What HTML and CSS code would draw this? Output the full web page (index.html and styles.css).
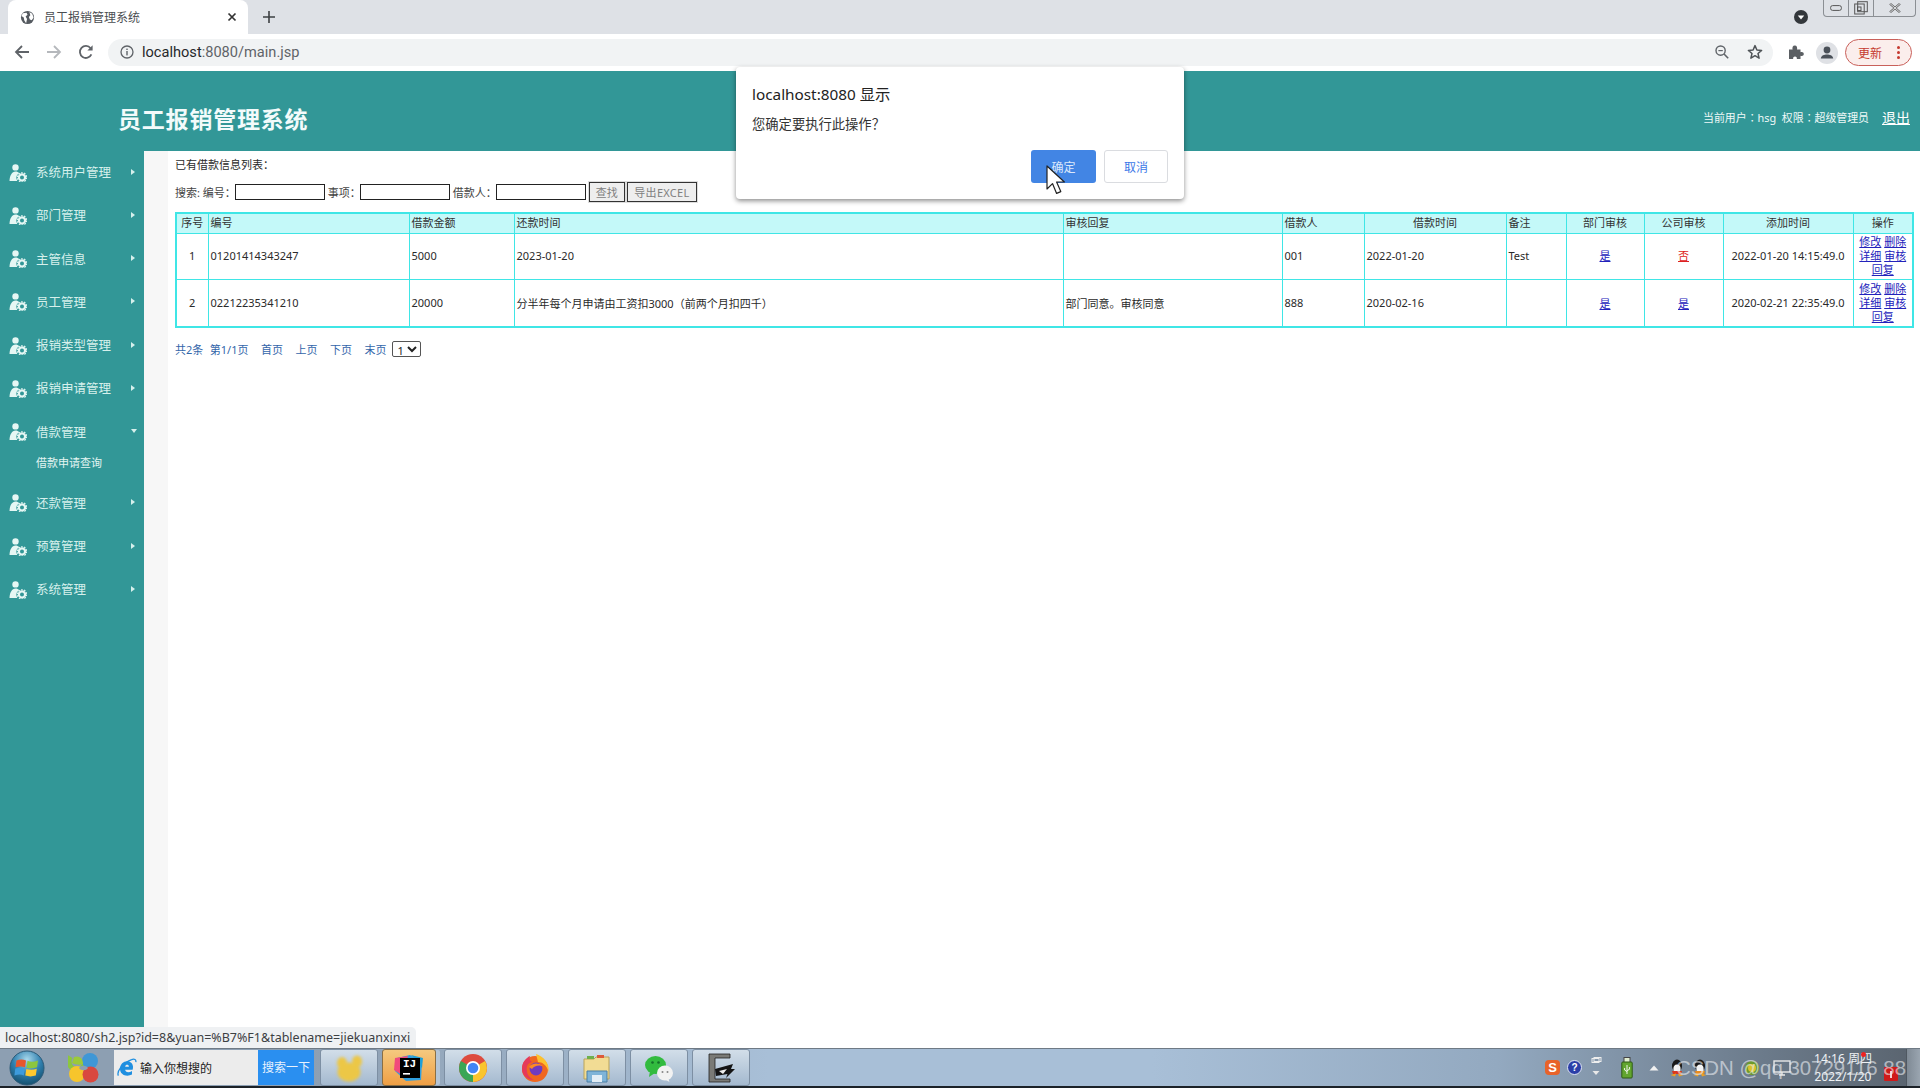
FILE: index.html
```html
<!DOCTYPE html>
<html lang="zh">
<head>
<meta charset="utf-8">
<title>员工报销管理系统</title>
<link rel="stylesheet" href="styles.css">
</head>
<body>
<svg class="sprite" width="0" height="0" aria-hidden="true">
  <symbol id="usergear" viewBox="0 0 18 18">
    <circle cx="6.5" cy="3.4" r="3.2" fill="#e6f7f4"/>
    <path d="M0.5 17 C0.8 11 3 7.6 6.5 7.4 C8 7.4 9.4 8 10.3 9.2 C8 10.4 7 12.5 7.4 14.5 L8.2 17 Z" fill="#e6f7f4"/>
    <circle cx="13" cy="13.4" r="3.1" fill="none" stroke="#e6f7f4" stroke-width="2.2"/>
    <circle cx="13" cy="13.4" r="4.7" fill="none" stroke="#e6f7f4" stroke-width="1.1" stroke-dasharray="1.7 1.25"/>
  </symbol>
</svg>

<header class="tabstrip">
  <div class="tab">
    <svg class="tab-globe" viewBox="0 0 16 16"><circle cx="8" cy="8" r="7" fill="#555a60"/><path d="M3 3.5 L7 3 L8 5 L6 7 L7.5 9.5 L6.5 14 L4.5 11 L4 8 L1.5 6.5 Z M10 2 L13 4 L14.5 8 L12.5 11 L10.5 10 L9.5 7.5 L11 5.5 Z" fill="#fff"/></svg>
    <span class="tab-title">员工报销管理系统</span>
    <svg class="tab-close" viewBox="0 0 10 10"><path d="M1.5 1.5 L8.5 8.5 M8.5 1.5 L1.5 8.5" stroke="#333" stroke-width="1.7" fill="none"/></svg>
  </div>
  <svg class="tab-new" viewBox="0 0 12 12"><path d="M6 0 V12 M0 6 H12" stroke="#3c4043" stroke-width="1.6" fill="none"/></svg>
  <svg class="tab-search" viewBox="0 0 14 14"><circle cx="7" cy="7" r="7" fill="#33373b"/><path d="M3.8 5.5 H10.2 L7 9.6 Z" fill="#fff"/></svg>
  <div class="winctl">
    <span class="winbtn win-min"><svg viewBox="0 0 12 6" width="12" height="6"><rect x="0.6" y="0.6" width="10.8" height="4.8" rx="2" fill="none" stroke="#555" stroke-width="1"/></svg></span>
    <span class="winbtn win-max"><svg viewBox="0 0 14 14" width="14" height="14"><rect x="0.7" y="3" width="9.5" height="10" fill="#dee1e6" stroke="#555"/><rect x="3.7" y="0.7" width="9.6" height="10" fill="none" stroke="#555"/><rect x="3.5" y="6" width="3.5" height="3.5" fill="none" stroke="#555"/></svg></span>
    <span class="winbtn win-close"><svg viewBox="0 0 12 10" width="12" height="10"><path d="M1 0.6 L11 9.4 M11 0.6 L1 9.4" stroke="#666" stroke-width="2.2" fill="none"/><path d="M1 0.6 L11 9.4 M11 0.6 L1 9.4" stroke="#e8eaed" stroke-width="0.9" fill="none"/></svg></span>
  </div>
</header>

<nav class="toolbar">
  <svg class="nav-ic" viewBox="0 0 16 16"><path d="M15 8 H2 M8 2 L2 8 L8 14" stroke="#5f6368" stroke-width="1.8" fill="none"/></svg>
  <svg class="nav-ic nav-fwd" viewBox="0 0 16 16"><path d="M1 8 H14 M8 2 L14 8 L8 14" stroke="#b5b8bc" stroke-width="1.8" fill="none"/></svg>
  <svg class="nav-ic nav-reload" viewBox="0 0 16 16"><path d="M13.4 10.4 A6 6 0 1 1 12.6 4.2" stroke="#5f6368" stroke-width="1.8" fill="none"/><path d="M14.6 1.2 V6.4 H9.4 Z" fill="#5f6368"/></svg>
  <div class="omnibox">
    <svg class="omni-info" viewBox="0 0 14 14"><circle cx="7" cy="7" r="6" fill="none" stroke="#5f6368" stroke-width="1.3"/><rect x="6.3" y="6" width="1.4" height="4.4" fill="#5f6368"/><rect x="6.3" y="3.6" width="1.4" height="1.4" fill="#5f6368"/></svg>
    <span class="omni-url"><b>localhost</b>:8080/main.jsp</span>
    <svg class="omni-zoom" viewBox="0 0 14 14"><circle cx="5.6" cy="5.6" r="4.6" fill="none" stroke="#5f6368" stroke-width="1.4"/><path d="M9 9 L13.2 13.2" stroke="#5f6368" stroke-width="1.6"/><path d="M3.4 5.6 H7.8" stroke="#5f6368" stroke-width="1.2"/></svg>
    <svg class="omni-star" viewBox="0 0 16 16"><path d="M8 1.6 L9.9 6 L14.6 6.4 L11 9.5 L12.1 14.2 L8 11.7 L3.9 14.2 L5 9.5 L1.4 6.4 L6.1 6 Z" fill="none" stroke="#4f5357" stroke-width="1.5" stroke-linejoin="round"/></svg>
  </div>
  <svg class="tool-puzzle" viewBox="0 0 16 16"><path d="M1 5.5 H4.6 C4 3.6 4.8 1.4 6.8 1.4 C8.8 1.4 9.6 3.6 9 5.5 H12.5 V8.2 C14.4 7.6 15.8 8.4 15.8 10 C15.8 11.6 14.4 12.4 12.5 11.8 V15 H8.8 C9.2 13.4 8.4 12.4 7 12.4 C5.6 12.4 4.8 13.4 5.2 15 H1 Z" fill="#5b5f63"/></svg>
  <svg class="tool-avatar" viewBox="0 0 22 22"><circle cx="11" cy="11" r="11" fill="#dfe1e5"/><circle cx="11" cy="8" r="3.4" fill="#4a5058"/><path d="M4.8 16.4 C5.4 13.4 8.2 12.6 11 12.6 C13.8 12.6 16.6 13.4 17.2 16.4 Z" fill="#4a5058"/></svg>
  <div class="update-pill">
    <span class="update-text">更新</span>
    <span class="update-dots"><i></i><i></i><i></i></span>
  </div>
</nav>

<div class="page">
  <div class="site-head">
    <h1 class="site-title">员工报销管理系统</h1>
    <div class="site-user">当前用户<span class="cp">：</span>hsg&nbsp; 权限<span class="cp">：</span>超级管理员<a class="site-exit" href="#">退出</a></div>
  </div>
  <div class="site-body">
    <aside class="sidebar">
      <div class="menu-row"><svg class="menu-ic"><use href="#usergear"/></svg><span class="menu-label">系统用户管理</span><i class="caret"></i></div>
      <div class="menu-row"><svg class="menu-ic"><use href="#usergear"/></svg><span class="menu-label">部门管理</span><i class="caret"></i></div>
      <div class="menu-row"><svg class="menu-ic"><use href="#usergear"/></svg><span class="menu-label">主管信息</span><i class="caret"></i></div>
      <div class="menu-row"><svg class="menu-ic"><use href="#usergear"/></svg><span class="menu-label">员工管理</span><i class="caret"></i></div>
      <div class="menu-row"><svg class="menu-ic"><use href="#usergear"/></svg><span class="menu-label">报销类型管理</span><i class="caret"></i></div>
      <div class="menu-row"><svg class="menu-ic"><use href="#usergear"/></svg><span class="menu-label">报销申请管理</span><i class="caret"></i></div>
      <div class="menu-row"><svg class="menu-ic"><use href="#usergear"/></svg><span class="menu-label">借款管理</span><i class="caret caret-down"></i></div>
      <div class="menu-sub">借款申请查询</div>
      <div class="menu-row"><svg class="menu-ic"><use href="#usergear"/></svg><span class="menu-label">还款管理</span><i class="caret"></i></div>
      <div class="menu-row"><svg class="menu-ic"><use href="#usergear"/></svg><span class="menu-label">预算管理</span><i class="caret"></i></div>
      <div class="menu-row"><svg class="menu-ic"><use href="#usergear"/></svg><span class="menu-label">系统管理</span><i class="caret"></i></div>
    </aside>
    <div class="stripe"></div>
    <main class="content">
      <p class="list-title">已有借款信息列表<span class="cp">：</span></p>
      <form class="search-row">
        <span>搜索: 编号<i class="cp">：</i></span><input class="search-input" type="text">
        <span>事项<i class="cp">：</i></span><input class="search-input" type="text">
        <span>借款人<i class="cp">：</i></span><input class="search-input" type="text">
        <button class="search-btn" type="button">查找</button>
        <button class="search-btn" type="button">导出EXCEL</button>
      </form>
      <table class="grid">
        <colgroup>
          <col class="c-seq"><col class="c-no"><col class="c-amt"><col class="c-date"><col class="c-reply"><col class="c-who"><col class="c-when"><col class="c-note"><col class="c-a1"><col class="c-a2"><col class="c-add"><col class="c-op">
        </colgroup>
        <thead>
          <tr>
            <th class="mid">序号</th><th>编号</th><th>借款金额</th><th>还款时间</th><th>审核回复</th><th>借款人</th><th class="mid">借款时间</th><th>备注</th><th class="mid">部门审核</th><th class="mid">公司审核</th><th class="mid">添加时间</th><th class="mid">操作</th>
          </tr>
        </thead>
        <tbody>
          <tr class="row-a">
            <td class="mid">1</td><td>01201414343247</td><td>5000</td><td>2023-01-20</td><td></td><td>001</td><td>2022-01-20</td><td>Test</td>
            <td class="mid"><a class="lnk" href="#">是</a></td><td class="mid"><a class="lnk lnk-red" href="#">否</a></td><td class="mid">2022-01-20 14:15:49.0</td>
            <td class="mid ops"><a class="lnk" href="#">修改</a> <a class="lnk" href="#">删除</a> <a class="lnk" href="#">详细</a> <a class="lnk" href="#">审核</a> <a class="lnk" href="#">回复</a></td>
          </tr>
          <tr class="row-b">
            <td class="mid">2</td><td>02212235341210</td><td>20000</td><td>分半年每个月申请由工资扣3000（前两个月扣四千）</td><td>部门同意。审核同意</td><td>888</td><td>2020-02-16</td><td></td>
            <td class="mid"><a class="lnk" href="#">是</a></td><td class="mid"><a class="lnk" href="#">是</a></td><td class="mid">2020-02-21 22:35:49.0</td>
            <td class="mid ops"><a class="lnk" href="#">修改</a> <a class="lnk" href="#">删除</a> <a class="lnk" href="#">详细</a> <a class="lnk" href="#">审核</a> <a class="lnk" href="#">回复</a></td>
          </tr>
        </tbody>
      </table>
      <div class="pager">
        <span class="pg-count">共2条</span><span>第1/1页</span><span class="pg-gap">首页</span><span class="pg-gap">上页</span><span class="pg-gap">下页</span><span class="pg-gap">末页</span>
        <select class="pg-select"><option>1</option></select>
      </div>
    </main>
  </div>
  <div class="status-bubble">localhost:8080/sh2.jsp?id=8&amp;yuan=%B7%F1&amp;tablename=jiekuanxinxi</div>
</div>

<footer class="taskbar">
  <svg class="orb" viewBox="0 0 36 36">
    <defs><radialGradient id="orbg" cx="50%" cy="25%" r="75%"><stop offset="0" stop-color="#a8d8ec"/><stop offset="0.55" stop-color="#2f7fae"/><stop offset="1" stop-color="#14506f"/></radialGradient></defs>
    <circle cx="18" cy="18" r="17" fill="url(#orbg)" stroke="#2d5a78"/>
    <path d="M7.5 10.5 Q12.5 8.5 17 10.5 L16 17.2 Q12 15.6 6.5 17.2 Z" fill="#e8562c"/>
    <path d="M18.5 10.8 Q23 13 29 10.4 L28 17.3 Q22.5 19.2 17.5 17.7 Z" fill="#8cc63f"/>
    <path d="M6.3 18.6 Q12 17 15.8 18.6 L14.8 25.4 Q11 23.6 5.4 25.4 Z" fill="#3d9bdc"/>
    <path d="M17.3 19 Q22.4 20.6 27.8 18.8 L26.8 25.6 Q21.4 27.2 16.3 25.6 Z" fill="#fdc82f"/>
  </svg>
  <svg class="logo360" viewBox="0 0 31 31">
    <circle cx="9" cy="9.5" r="8" fill="none" stroke="#8cc63f" stroke-width="5" stroke-dasharray="30 20"/>
    <circle cx="22" cy="9" r="8" fill="#3f97d6"/>
    <circle cx="9" cy="22" r="8" fill="#f6c52c"/>
    <circle cx="22.5" cy="22.5" r="8" fill="#d9483f"/>
    <path d="M6 5 C11 3 15 6 15 12 C12 13 8 13 4 11 Z" fill="#9cc93a"/>
    <path d="M11 16 C13 13 18 13 20 16 C18 19 13 19 11 16 Z" fill="#8d9fb2"/>
  </svg>
  <div class="tb-search">
    <svg class="tb-ie" viewBox="0 0 20 20"><path d="M15.6 11.8 H8.2 C8.2 14.4 12 15 15 12.9 V16.6 C9.6 19.2 3 17 3 10.8 C3 6 7 2.8 10.6 3.2 C15 3.6 17 7.6 15.6 11.8 Z M8.2 8.8 H11.9 C11.9 6.2 8.4 6.2 8.2 8.8 Z" fill="#1f8fe0" fill-rule="evenodd"/><path d="M1.4 17.6 C-0.6 14 5 5.4 14.6 1.6 C17.4 0.4 19.4 1.6 18.8 4.2" fill="none" stroke="#1f8fe0" stroke-width="1.3"/></svg>
    <span class="tb-search-text">输入你想搜的</span>
    <span class="tb-search-btn">搜索一下</span>
  </div>
  <div class="tb-apps">
    <div class="tb-app">
      <svg class="tb-ic tb-blur" viewBox="0 0 30 30"><ellipse cx="15" cy="19" rx="11.5" ry="9.5" fill="#ecc746"/><ellipse cx="8" cy="10" rx="5" ry="6" fill="#ecc746"/><ellipse cx="23" cy="8.5" rx="5" ry="6" fill="#ecc746"/></svg>
    </div>
    <div class="tb-app tb-active">
      <svg class="tb-ic" viewBox="0 0 30 30"><path d="M3 5 L16 2 L28 10 L27 27 L12 28 L1 18 Z" fill="#2f9fe0"/><path d="M1 5 L14 3 L8 22 L0 17 Z" fill="#f14a7c"/><path d="M17 2 L29 5 L28 15 Z" fill="#1f9fd8"/><rect x="6" y="5" width="20" height="20" fill="#000"/><text class="ij-text" x="9" y="14">IJ</text><rect x="9" y="20" width="7" height="1.6" fill="#fff"/></svg>
    </div>
    <div class="tb-app">
      <svg class="tb-ic" viewBox="0 0 30 30"><circle cx="15" cy="15" r="14" fill="#dd4b3e"/><path d="M15 15 L27.1 8 A14 14 0 0 1 15 29 Z" fill="#f9c52d"/><path d="M15 15 L15 29 A14 14 0 0 1 2.9 8 Z" fill="#3aa655"/><circle cx="15" cy="15" r="7" fill="#fff"/><circle cx="15" cy="15" r="5.3" fill="#4285f4"/></svg>
    </div>
    <div class="tb-app">
      <svg class="tb-ic" viewBox="0 0 30 30"><circle cx="15" cy="16" r="13" fill="#f0671f"/><path d="M16 1 C23 3 30 10 28.5 19 C27 12 22 9 18 9 Z" fill="#fcc12e"/><path d="M2 16 C2 9 6 5 10 3 C9 6 10 8 12 9 C8 10 6 13 7 18 C7 22 10 25 14 27 C7 27 2 22 2 16 Z" fill="#e53a5a"/><circle cx="16" cy="16" r="6.4" fill="#6f3bc0"/><path d="M9 14 C12 10 18 9 23 13 C18 11.5 14 13 12 16 Z" fill="#fb8b24"/></svg>
    </div>
    <div class="tb-app">
      <svg class="tb-ic" viewBox="0 0 30 30"><path d="M2 6 H12 L14 4 H27 V26 H2 Z" fill="#f2dc94" stroke="#b9a35a"/><rect x="5" y="3" width="7" height="3" fill="#6fb04c"/><rect x="15" y="2" width="7" height="3" fill="#dd5a3a"/><path d="M5 18 H25 V29 H5 Z" fill="#7fb4d8" stroke="#4a7ea5"/><path d="M10 22 H20 V29 H10 Z" fill="#e3eef6"/></svg>
    </div>
    <div class="tb-app">
      <svg class="tb-ic" viewBox="0 0 30 30"><ellipse cx="11.5" cy="12" rx="10.5" ry="9" fill="#32bb3f"/><path d="M6 18 L5 24 L11 20 Z" fill="#32bb3f"/><circle cx="8.5" cy="9.5" r="1.3" fill="#14702a"/><circle cx="14.5" cy="9.5" r="1.3" fill="#14702a"/><ellipse cx="21" cy="20" rx="8" ry="7.5" fill="#f2f2f2"/><path d="M24 25 L25.5 29 L21 26.5 Z" fill="#f2f2f2"/><circle cx="18.5" cy="19" r="1" fill="#888"/><circle cx="23.5" cy="19" r="1" fill="#888"/></svg>
    </div>
    <div class="tb-app">
      <svg class="tb-ic" viewBox="0 0 30 30"><path d="M3 1 H24 V5 H9 V26 H24 V29 H3 Z" fill="#7a7a76" stroke="#222" stroke-width="0.8"/><path d="M9 16 L27 11 L25 16 L29 16 L20 25 L21.5 21 L10 23 Z" fill="#141414"/><path d="M13 18 L21 16 L17 21 Z" fill="#eee"/></svg>
    </div>
  </div>
  <div class="tray">
    <span class="tray-sogou">S</span>
    <span class="tray-help">?</span>
    <svg class="tray-small" viewBox="0 0 12 22"><rect x="2" y="1.5" width="7" height="4" fill="none" stroke="#eee"/><rect x="4" y="0.5" width="7" height="4" fill="none" stroke="#eee"/><path d="M2.5 14 H9.5 L6 18 Z" fill="#e8e8e8"/></svg>
    <svg class="tray-usb" viewBox="0 0 12 22"><rect x="3" y="0.5" width="6" height="5" fill="#e2efd0" stroke="#444"/><rect x="0.8" y="5" width="10.4" height="16" rx="1" fill="#62a52e" stroke="#2e5a14"/><path d="M6 8 V17 M3.6 11 V13 L6 14.6 M8.4 10 V12.4 L6 13.6" stroke="#fff" stroke-width="0.9" fill="none"/></svg>
    <svg class="tray-arrow" viewBox="0 0 10 6"><path d="M5 0.5 L9.5 5.5 H0.5 Z" fill="#f1f1f1"/></svg>
    <svg class="tray-qq" viewBox="0 0 16 18"><ellipse cx="8" cy="7" rx="5" ry="6.5" fill="#191919"/><ellipse cx="8" cy="10" rx="3.6" ry="4.5" fill="#f5f5f5"/><path d="M3 12 H13 L12 15 H4 Z" fill="#d9371f"/><path d="M1.5 16 L7 14.5 L6 17.5 Z M14.5 16 L9 14.5 L10 17.5 Z" fill="#f0a11f"/></svg>
    <svg class="tray-qq" viewBox="0 0 16 18"><ellipse cx="8" cy="7" rx="5" ry="6.5" fill="#191919"/><ellipse cx="8" cy="10" rx="3.6" ry="4.5" fill="#f5f5f5"/><path d="M3 12 H13 L12 15 H4 Z" fill="#e98b1e"/><path d="M1.5 16 L7 14.5 L6 17.5 Z M14.5 16 L9 14.5 L10 17.5 Z" fill="#f0a11f"/></svg>
    <svg class="tray-green" viewBox="0 0 16 16"><circle cx="8" cy="8" r="7" fill="#6d9a2c"/><circle cx="8" cy="8" r="4" fill="#d8c22c"/></svg>
    <svg class="tray-net" viewBox="0 0 18 16"><rect x="1" y="1" width="16" height="11" fill="none" stroke="#e9e9e9" stroke-width="1.4"/><path d="M6 15 H12 M9 12 V15" stroke="#e9e9e9" stroke-width="1.4"/></svg>
    <div class="clock"><span>14:16 周四</span><span>2022/1/20</span></div>
    <svg class="tray-flag" viewBox="0 0 14 14"><rect width="14" height="14" rx="1" fill="#cf1a1a"/><rect x="6.2" y="4" width="1.6" height="7" fill="#fff"/></svg>
    <div class="show-desktop"></div>
  </div>
  <span class="tray-dot"></span>
  <span class="watermark">CSDN @qq 30729116 88</span>
</footer>

<div class="dialog">
  <div class="dlg-title">localhost:8080 显示</div>
  <div class="dlg-msg">您确定要执行此操作<span class="cp">？</span></div>
  <div class="dlg-actions">
    <button class="dlg-btn dlg-ok" type="button">确定</button>
    <button class="dlg-btn dlg-cancel" type="button">取消</button>
  </div>
</div>
<svg class="cursor" viewBox="0 0 20 30"><path d="M1 1 V24 L6.5 18.6 L10.6 28.4 L14.8 26.6 L10.6 17 L18.4 17 Z" fill="#fff" stroke="#222" stroke-width="1.2" stroke-linejoin="round"/></svg>
</body>
</html>
```

FILE: styles.css
```css
* { box-sizing: border-box; }
html, body { margin: 0; padding: 0; height: 1088px; overflow: hidden; }
body {
  display: flex;
  flex-direction: column;
  position: relative;
  width: 1920px;
  background: #fff;
  font-family: "Noto Sans", "Noto Sans CJK SC", sans-serif;
  font-size: 11px;
  color: #222;
}
.sprite { position: absolute; }
.cp { font-family: "Noto Sans CJK TC", sans-serif; font-style: normal; }

/* browser chrome */
.tabstrip {
  height: 34px;
  flex: none;
  background: #dee1e6;
  display: flex;
  align-items: flex-start;
  padding-left: 8px;
}
.tab {
  width: 240px;
  height: 34px;
  background: #fff;
  border-radius: 8px 8px 0 0;
  display: flex;
  align-items: center;
  padding: 0 11px 0 12px;
  margin-right: 15px;
}
.tab-globe { width: 15px; height: 15px; margin-right: 9px; flex: none; }
.tab-title { font-size: 12px; color: #4a4d51; flex: 1; }
.tab-close { width: 10px; height: 10px; flex: none; }
.tab-new { width: 12px; height: 12px; margin-top: 11px; flex: none; }
.tab-search { width: 14px; height: 14px; margin: 10px 15px 0 auto; flex: none; }
.winctl {
  display: flex;
  width: 93px;
  height: 17px;
  margin-right: 4px;
  border: 1px solid #8b8f94;
  border-top: 0;
  border-radius: 0 0 4px 4px;
}
.winbtn { display: flex; align-items: center; justify-content: center; height: 16px; border-right: 1px solid #8b8f94; }
.win-min { width: 25px; }
.win-max { width: 25px; }
.win-close { flex: 1; border-right: 0; }

.toolbar {
  height: 37px;
  flex: none;
  background: #fff;
  display: flex;
  align-items: center;
  padding: 0 8px 0 14px;
}
.nav-ic { width: 16px; height: 16px; flex: none; margin: 0 16px 2px 0; }
.nav-reload { margin-right: 14px; }
.omnibox {
  width: 1665px;
  height: 27px;
  background: #f1f3f4;
  border-radius: 14px;
  display: flex;
  align-items: center;
  padding: 0 10px 0 12px;
}
.omni-info { width: 14px; height: 14px; margin: 0 8px 2px 0; flex: none; }
.omni-url { font-size: 14.6px; color: #5f6368; flex: 1; font-family: "Roboto", sans-serif; padding-bottom: 2px; }
.omni-url b { font-weight: 400; color: #26282b; }
.omni-zoom { width: 14px; height: 14px; margin: 0 18px 2px 0; flex: none; }
.omni-star { width: 16px; height: 16px; margin-bottom: 2px; flex: none; }
.tool-puzzle { width: 16px; height: 16px; margin: 0 0 2px 15px; flex: none; }
.tool-avatar { width: 22px; height: 22px; margin-left: 12px; flex: none; }
.update-pill {
  width: 67px;
  height: 27px;
  margin-left: 7px;
  border: 1px solid #c9605a;
  border-radius: 14px;
  background: #fbeeec;
  display: flex;
  align-items: center;
  padding: 0 11px 0 12px;
  justify-content: space-between;
  flex: none;
}
.update-text { font-size: 12px; color: #c5392f; }
.update-dots { display: flex; flex-direction: column; gap: 2px; }
.update-dots i { display: block; width: 3px; height: 3px; border-radius: 50%; background: #c5392f; }

/* page */
.page { flex: 1; min-height: 0; position: relative; display: flex; flex-direction: column; background: #fff; padding-bottom: 21px; }
.site-head {
  height: 80px;
  flex: none;
  background: #329797;
  display: flex;
  align-items: center;
  padding: 0 10px 0 118px;
  color: #fff;
}
.site-title { margin: 0; font-size: 23px; font-weight: 700; letter-spacing: 0.8px; color: #f3fbfb; position: relative; top: 7px; }
.site-user { margin-left: auto; font-size: 10.9px; color: #eef9f8; display: flex; align-items: center; position: relative; top: 6px; white-space: pre; }
.site-exit { margin-left: 13px; font-size: 14px; color: #fff; text-decoration: underline; }
.site-body { flex: 1; min-height: 0; display: flex; }
.sidebar { width: 144px; flex: none; background: #329797; }
.menu-row { height: 43.25px; display: flex; align-items: center; padding: 0 0 2px 9px; color: #d6f0ec; }
.menu-ic { width: 18px; height: 18px; flex: none; margin-right: 9px; position: relative; top: 1px; }
.menu-label { font-size: 12.5px; flex: 1; }
.caret { display: block; width: 0; height: 0; margin-right: 9px; border-left: 4px solid #d6f0ec; border-top: 3.5px solid transparent; border-bottom: 3.5px solid transparent; }
.caret-down { margin-right: 7px; border-top: 4px solid #d6f0ec; border-left: 3.5px solid transparent; border-right: 3.5px solid transparent; border-bottom: 0; }
.menu-sub { height: 28px; padding-left: 36px; line-height: 18px; font-size: 11px; color: #e3f5f2; }
.stripe { width: 24px; flex: none; background: #f7f7f7; }
.content { flex: 1; min-width: 0; padding: 0 0 0 7px; }
.list-title { margin: 0; height: 28px; line-height: 26px; font-size: 11px; color: #2a2a2a; }
.search-row { height: 33px; display: flex; align-items: center; font-size: 11px; color: #444; padding-bottom: 8px; }
.search-row > span { white-space: nowrap; }
.search-input { width: 90px; height: 16px; border: 1px solid #222; background: #fff; padding: 0; margin: 0 3px 0 -1px; }
.search-btn {
  height: 20px;
  padding: 0 6px;
  font: inherit;
  color: #808080;
  background: #eee;
  border: 1px solid #333;
  margin: 0 3px 0 0;
  outline: 1px solid #ddd;
}
.search-btn + .search-btn { padding: 0 6.5px; margin-left: -1px; letter-spacing: 0.3px; }
.grid {
  table-layout: fixed;
  width: 1737px;
  height: 115px;
  border-collapse: collapse;
  border: 2px solid #3fe6e6;
  background: #fff;
}
.c-seq { width: 32px; } .c-no { width: 201px; } .c-amt { width: 105px; } .c-date { width: 549px; }
.c-reply { width: 219px; } .c-who { width: 82px; } .c-when { width: 142px; } .c-note { width: 60px; }
.c-a1 { width: 78px; } .c-a2 { width: 79px; } .c-add { width: 130px; } .c-op { width: 60px; }
.grid th, .grid td { border: 1px solid #3fe6e6; padding: 0 2px; text-align: left; font-weight: 400; font-size: 11px; color: #2a2a2a; white-space: nowrap; }
.grid thead th { background: #c4f9f9; height: 20px; color: #333; padding-bottom: 2px; }
.row-a td { height: 46px; padding-bottom: 2px; }
.row-b td { height: 48px; }
.grid .mid { text-align: center; }
.grid .ops { white-space: normal; line-height: 14px; padding: 0 3px; }
.lnk { color: #2222bb; text-decoration: underline; }
.grid .lnk-red, .lnk-red { color: #dd2222; }
.pager { margin-top: 13px; display: flex; align-items: center; height: 16px; color: #3366aa; font-size: 11px; }
.pager span { margin-right: 3px; }
.pager span.pg-count { margin-right: 6.5px; }
.pager span.pg-gap { margin-left: 9.5px; margin-right: 3px; }
.pg-select { width: 29px; height: 16px; margin-left: 3px; font-size: 11px; line-height: 14px; padding: 0; background: #fff; color: #222; border: 1px solid #555; border-radius: 2px; font-family: inherit; }
.status-bubble {
  position: absolute;
  left: 0;
  bottom: 0;
  width: 416px;
  height: 21px;
  background: #eff1f3;
  border-top-right-radius: 5px;
  line-height: 21px;
  padding-left: 5px;
  font-size: 12.5px;
  color: #3c4043;
  white-space: nowrap;
}

/* taskbar */
.taskbar {
  height: 40px;
  flex: none;
  position: relative;
  display: flex;
  align-items: center;
  background: linear-gradient(90deg, #8d9fb2 0%, #8d9fb2 16%, #a8bfd7 40%, #a8bfd7 60%, #93a9c0 78%, #6b7a8a 92%, #59636e 100%);
  border-top: 1px solid #6f7a85;
  border-bottom: 2px solid #1c2228;
  padding-left: 9px;
}
.orb { width: 36px; height: 36px; flex: none; margin-right: 23px; }
.logo360 { width: 31px; height: 31px; flex: none; margin-right: 15px; }
.tb-search { width: 200px; height: 35px; flex: none; background: #ececec; display: flex; align-items: center; }
.tb-ie { width: 20px; height: 20px; flex: none; margin-left: 3px; }
.tb-search-text { font-size: 12px; color: #222; flex: 1; margin-left: 3px; }
.tb-search-btn { width: 56px; height: 35px; background: #2a8ff0; color: #e8f2fd; font-size: 12px; line-height: 35px; text-align: center; flex: none; }
.tb-apps { display: flex; gap: 4px; margin-left: 6px; }
.tb-app {
  width: 58px;
  height: 37px;
  display: flex;
  align-items: center;
  justify-content: center;
  border: 1px solid #7d8fa3;
  border-radius: 3px;
  background: linear-gradient(180deg, #d2dee9, #a4b9cf);
}
.tb-active { width: 54px; margin-right: 4px; background: linear-gradient(180deg, #f5c97f, #ef9f45); border-color: #8a6f45; box-shadow: 5px 0 0 -1px #b4c5d7; }
.tb-ic { width: 30px; height: 30px; }
.tb-blur { filter: blur(1.5px); }
.ij-text { font: 700 11px "Liberation Mono", monospace; fill: #fff; }
.tray { margin-left: auto; display: flex; align-items: center; height: 100%; }
.tray-sogou { width: 15px; height: 15px; border-radius: 4px; background: #e8632a; color: #fff; font: 700 13px/15px "Liberation Sans", sans-serif; text-align: center; margin-right: 7px; }
.tray-help { width: 15px; height: 15px; border-radius: 50%; background: #2b3fa8; color: #fff; border: 1px solid #dfe4f5; font: 700 10px/13px "Liberation Sans", sans-serif; text-align: center; margin-right: 8px; }
.tray-small { width: 12px; height: 22px; margin-right: 19px; }
.tray-usb { width: 12px; height: 22px; margin-right: 16px; }
.tray-arrow { width: 10px; height: 6px; margin-right: 10px; }
.tray-qq { width: 16px; height: 18px; margin-right: 6.5px; }
.tray-green { width: 16px; height: 16px; margin: 0 13px 0 30px; }
.tray-net { width: 18px; height: 16px; }
.clock { width: 80px; margin-left: 12px; display: flex; flex-direction: column; align-items: center; color: #eef1f4; font-size: 12px; line-height: 18px; }
.tray-flag { width: 14px; height: 14px; margin: 12px 8px 0 1px; }
.show-desktop { width: 14px; height: 100%; background: linear-gradient(90deg, #7f8a95, #9aa5b0); border-left: 1px solid #4f5861; }
.tray-dot { position: absolute; left: 1861px; top: 3px; width: 5px; height: 5px; border-radius: 50%; background: #ee2222; }
.watermark {
  position: absolute;
  right: 14px;
  top: 6px;
  font-size: 20.4px;
  line-height: 26px;
  color: rgba(235, 238, 242, 0.62);
  font-family: "Liberation Sans", sans-serif;
  white-space: nowrap;
}

/* alert dialog */
.dialog {
  position: absolute;
  left: 736px;
  top: 67px;
  width: 448px;
  height: 132px;
  background: #fff;
  border-radius: 4px;
  box-shadow: 0 2px 5px rgba(0,0,0,.45);
  padding: 17px 16px 0;
  color: #222;
}
.dlg-title { font-size: 15.3px; line-height: 20px; }
.dlg-msg { font-size: 13.3px; line-height: 18px; margin-top: 11px; color: #333; }
.dlg-actions { display: flex; justify-content: flex-end; gap: 8px; margin-top: 17px; }
.dlg-btn { height: 33px; border-radius: 3px; font: 12px "Noto Sans", "Noto Sans CJK SC", sans-serif; padding: 0; }
.dlg-ok { width: 65px; background: #4285e4; color: #dbe8fb; border: 0; }
.dlg-cancel { width: 64px; background: #fff; color: #3b78e7; border: 1px solid #dadce0; }
.cursor { position: absolute; left: 1046px; top: 165px; width: 20px; height: 30px; }
```
